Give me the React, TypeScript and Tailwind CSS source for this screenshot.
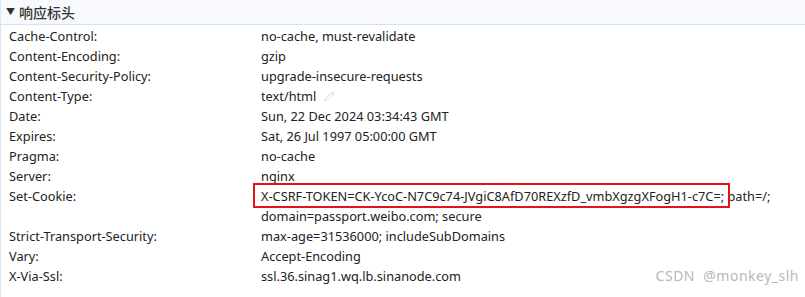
import { Pencil } from 'lucide-react';

const rows: [string, string][] = [
  ['Cache-Control:', 'no-cache, must-revalidate'],
  ['Content-Encoding:', 'gzip'],
  ['Content-Security-Policy:', 'upgrade-insecure-requests'],
  ['Content-Type:', 'text/html'],
  ['Date:', 'Sun, 22 Dec 2024 03:34:43 GMT'],
  ['Expires:', 'Sat, 26 Jul 1997 05:00:00 GMT'],
  ['Pragma:', 'no-cache'],
  ['Server:', 'nginx'],
  ['Set-Cookie:', ''],
  ['Strict-Transport-Security:', 'max-age=31536000; includeSubDomains'],
  ['Vary:', 'Accept-Encoding'],
  ['X-Via-Ssl:', 'ssl.36.sinag1.wq.lb.sinanode.com'],
];

export default function App() {
  return (
    <div
      className="relative h-[297px] w-[805px] overflow-hidden border-l border-[#d6e8f7] bg-white text-[12.75px] text-[#222]"
      style={{ fontFamily: '"Noto Sans", "Noto Sans CJK SC", sans-serif' }}
    >
      <div className="flex h-[25px] items-center gap-[4px] border-b border-[#cde3f6] bg-[#f7f9fc] pl-[5px] text-[#333]">
        <span className="text-[9px]">▼</span>
        <span className="text-[14px] font-medium">响应标头</span>
      </div>
      <div className="pt-[1px]">
        {rows.map(([k, v]) => (
          <div key={k} className="grid grid-cols-[252px_1fr] pl-[8px] leading-[20px]">
            <div>{k}</div>
            {k === 'Set-Cookie:' ? (
              <div>
                <span className="relative">
                  X-CSRF-TOKEN=CK-YcoC-N7C9c74-JVgiC8AfD70REXzfD_vmbXgzgXFogH1-c7C=;
                  <span className="absolute -left-[8px] -right-[6px] -top-[4px] -bottom-[3px] border-2 border-[#e3121d]" />
                </span>{' '}
                path=/;
                <br />
                domain=passport.weibo.com; secure
              </div>
            ) : (
              <div className="flex items-center gap-[8px]">
                <span>{v}</span>
                {k === 'Content-Type:' && <Pencil size={11} className="text-[#d8d8d8]" />}
              </div>
            )}
          </div>
        ))}
      </div>
      <div className="absolute bottom-[11px] right-[6px] text-[14px] tracking-[0.5px] text-[#b8b8b8]">
        CSDN&nbsp; @monkey_slh
      </div>
    </div>
  );
}
